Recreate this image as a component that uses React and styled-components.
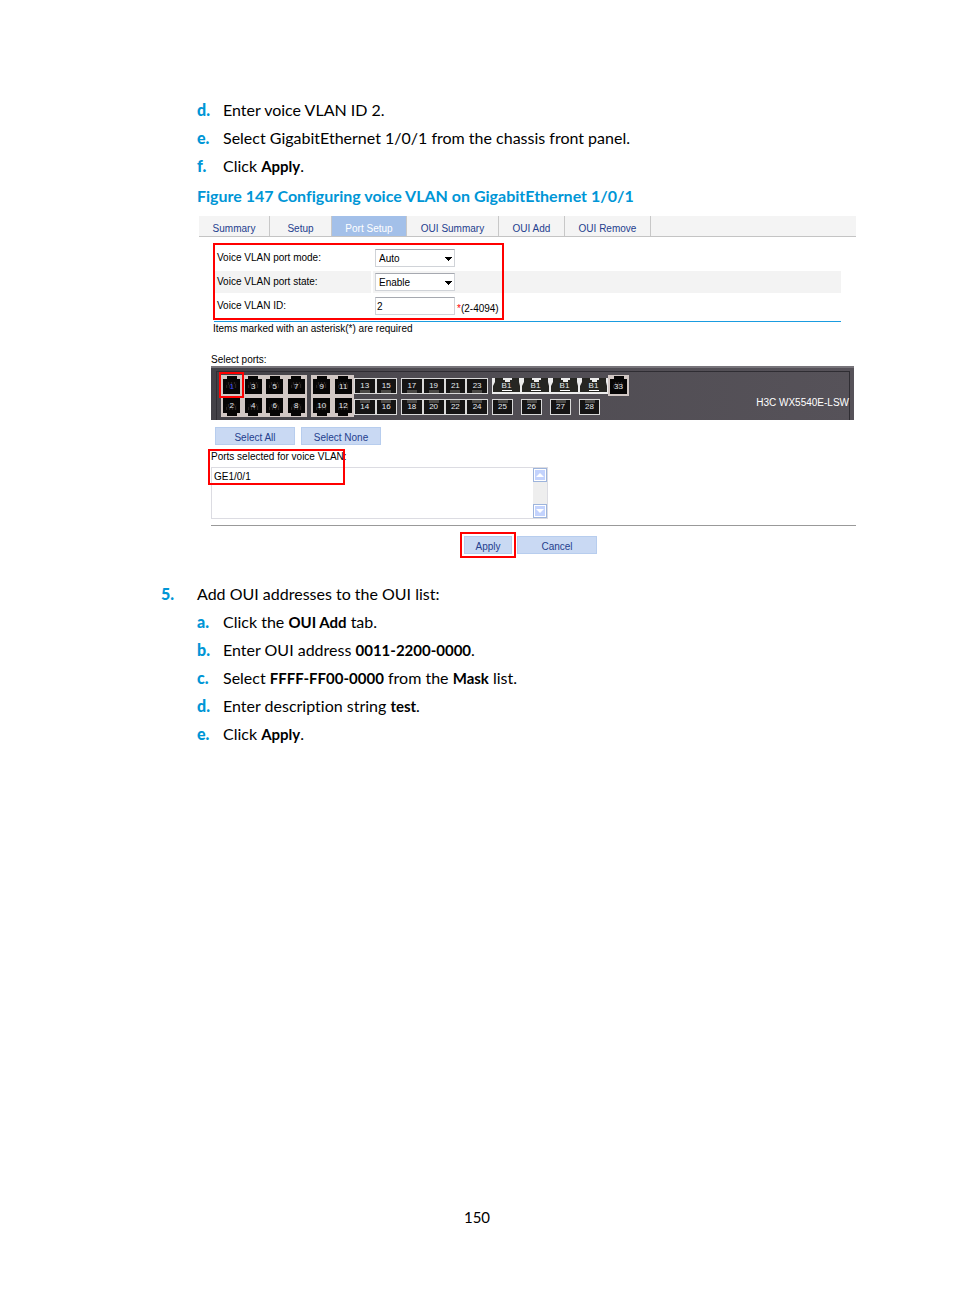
import React, { useState } from 'react';
import styled, { createGlobalStyle, css } from 'styled-components';

const tabs = [
  { label: 'Summary', width: 71 },
  { label: 'Setup', width: 62 },
  { label: 'Port Setup', width: 75 },
  { label: 'OUI Summary', width: 92 },
  { label: 'OUI Add', width: 66 },
  { label: 'OUI Remove', width: 86 },
];

const rj45 = [
  [[1, 3, 5, 7], [2, 4, 6, 8]],
  [[9, 11], [10, 12]],
];
const sfp = [
  [[13, 15], [14, 16]],
  [[17, 19, 21, 23], [18, 20, 22, 24]],
];

function Steps({ items }) {
  return (
    <List>
      {items.map(([mark, text]) => (
        <Step key={mark}>
          <Mark>{`${mark}.`}</Mark>
          <span>{text}</span>
        </Step>
      ))}
    </List>
  );
}

function Dropdown({ id, options }) {
  return (
    <SelectWrap>
      <Select id={id}>
        {options.map((o) => <option key={o}>{o}</option>)}
      </Select>
      <Caret viewBox="0 0 7 4"><path d="M0 0h7v1H6v1H5v1H4v1H3V3H2V2H1V1H0z" fill="#000" /></Caret>
    </SelectWrap>
  );
}

function ComboPort() {
  return (
    <Combo type="button">
      <ComboArt viewBox="0 0 29 16">
        <path d="M0 0h29v16H0z" fill="#ececec" />
        <path d="M3 0h8v2h2v2h5V2h2V0h7v4l1 4v6H1V8l2-4z" fill="#262622" />
        <path d="M10 12h10v1H10z" fill="#fff" />
      </ComboArt>
      <ComboLabel>B1</ComboLabel>
    </Combo>
  );
}

function Chassis({ selected, onSelect }) {
  return (
    <Frame>
      <FrontPanel>
        <Ports>
          {rj45.map((rows) => (
            <RjGroup key={rows[0][0]} $cols={rows[0].length}>
              {rows.map((row, r) => row.map((n) => (
                <RjPort
                  key={n}
                  type="button"
                  $flip={r === 1}
                  $selected={selected === n}
                  onClick={() => onSelect(n)}
                >
                  {n}
                </RjPort>
              )))}
            </RjGroup>
          ))}
          {sfp.map((rows, i) => (
            <SfpGroup key={rows[0][0]} $cols={rows[0].length} $spaced={i === 1}>
              {rows.map((row, r) => row.map((n) => (
                <SfpPort key={n} type="button" $flip={r === 1}>{n}</SfpPort>
              )))}
            </SfpGroup>
          ))}
          <ComboGroup>
            {[0, 1, 2, 3].map((n) => <ComboPort key={n} />)}
            {[25, 26, 27, 28].map((n) => (
              <SfpPort key={n} type="button" $flip>{n}</SfpPort>
            ))}
          </ComboGroup>
          <Single>
            <RjPort type="button">33</RjPort>
          </Single>
        </Ports>
        <Model>H3C WX5540E-LSW</Model>
      </FrontPanel>
    </Frame>
  );
}

function PortSetup() {
  const [port, setPort] = useState(1);

  return (
    <Screen>
      <Tabs>
        {tabs.map((t) => (
          <Tab key={t.label} href="#" $width={t.width} $active={t.label === 'Port Setup'}>
            {t.label}
          </Tab>
        ))}
      </Tabs>
      <Form>
        <Row>
          <Cell as="label" htmlFor="mode">Voice VLAN port mode:</Cell>
          <Control><Dropdown id="mode" options={['Auto', 'Manual']} /></Control>
        </Row>
        <Row $shaded>
          <Cell as="label" htmlFor="state">Voice VLAN port state:</Cell>
          <Control><Dropdown id="state" options={['Enable', 'Disable']} /></Control>
        </Row>
        <Row>
          <Cell as="label" htmlFor="vlan">Voice VLAN ID:</Cell>
          <Control>
            <Input id="vlan" type="text" defaultValue="2" />
            <Hint>
              <em>*</em>
              (2-4094)
            </Hint>
          </Control>
        </Row>
        <FormMark />
      </Form>
      <Note>Items marked with an asterisk(*) are required</Note>
      <Body>
        <Label as="p">Select ports:</Label>
        <Chassis selected={port} onSelect={setPort} />
        <SelectButtons>
          <Button type="button">Select All</Button>
          <Button type="button">Select None</Button>
        </SelectButtons>
        <Selected>
          <Label htmlFor="ports">Ports selected for voice VLAN:</Label>
          <ListBox>
            <TextArea id="ports" readOnly value={`GE1/0/${port}`} />
            <Scroll>
              <ScrollButton type="button" aria-label="Scroll up">
                <svg width="8" height="4" viewBox="0 0 8 4"><path d="M4 0l4 4H0z" fill="#fff" /></svg>
              </ScrollButton>
              <ScrollButton type="button" aria-label="Scroll down">
                <svg width="8" height="4" viewBox="0 0 8 4"><path d="M0 0h8L4 4z" fill="#fff" /></svg>
              </ScrollButton>
            </Scroll>
          </ListBox>
          <ListMark />
        </Selected>
        <Actions>
          <Marked><Button type="button" $small>Apply</Button></Marked>
          <Button type="button">Cancel</Button>
        </Actions>
      </Body>
    </Screen>
  );
}

function App() {
  return (
    <Page>
      <GlobalStyle />
      <Main>
        <Indent>
          <Steps
            items={[
              ['d', 'Enter voice VLAN ID 2.'],
              ['e', 'Select GigabitEthernet 1/0/1 from the chassis front panel.'],
              ['f', <>Click <b>Apply</b>.</>],
            ]}
          />
          <Figure>
            <Caption>Figure 147 Configuring voice VLAN on GigabitEthernet 1/0/1</Caption>
            <PortSetup />
          </Figure>
        </Indent>
        <MainStep>
          <Mark>5.</Mark>
          <div>
            Add OUI addresses to the OUI list:
            <Steps
              items={[
                ['a', <>Click the <b>OUI Add</b> tab.</>],
                ['b', <>Enter OUI address <b>0011-2200-0000</b>.</>],
                ['c', <>Select <b>FFFF-FF00-0000</b> from the <b>Mask</b> list.</>],
                ['d', <>Enter description string <b>test</b>.</>],
                ['e', <>Click <b>Apply</b>.</>],
              ]}
            />
          </div>
        </MainStep>
      </Main>
      <Footer>150</Footer>
    </Page>
  );
}

export default App;

const GlobalStyle = createGlobalStyle`
  * {
    box-sizing: border-box;
  }
  body {
    margin: 0;
    background: #fff;
    color: #000;
    font: 16px/28px Lato, sans-serif;
    font-variant-ligatures: none;
  }
  button, input, select, textarea {
    margin: 0;
    padding: 0;
    border: 0;
    border-radius: 0;
    font: inherit;
    color: inherit;
  }
  p {
    margin: 0;
  }
  b {
    font-size: 15px;
    line-height: 20px;
  }
`;
const Page = styled.div`
  display: flex;
  flex-direction: column;
  min-height: 100vh;
`;
const Main = styled.main`
  padding: 96px 98px 0 161px;
`;
const Indent = styled.div`
  padding-left: 36px;
`;
const List = styled.ol`
  margin: 0;
  padding: 0;
  list-style: none;
`;
const Step = styled.li`
  display: grid;
  grid-template-columns: 26px 1fr;
`;
const MainStep = styled.div`
  display: grid;
  grid-template-columns: 36px 1fr;
  margin-top: 22px;
`;
const Mark = styled.span`
  color: #0096d6;
  font-weight: 900;
`;
const Figure = styled.figure`
  margin: 0;
  padding-top: 2px;
`;
const Caption = styled.figcaption`
  color: #0096d6;
  font-weight: 700;
`;
const Footer = styled.footer`
  margin-top: auto;
  padding-bottom: 65px;
  text-align: center;
  font-size: 15px;
`;
const Screen = styled.div`
  margin: 6px 0 0 2px;
  font: 10px/12px 'Liberation Sans', sans-serif;
`;
const Tabs = styled.nav`
  display: flex;
  height: 21px;
  border-bottom: 1px solid #c4c4c4;
  background: #f4f4f4;
`;
const Tab = styled.a`
  width: ${(p) => p.$width}px;
  border-right: 1px solid #c8c8c8;
  padding-top: 3px;
  color: ${(p) => (p.$active ? '#fff' : '#24408e')};
  background: ${(p) => (p.$active ? '#a3c0e9' : 'none')};
  line-height: 20px;
  text-align: center;
  text-decoration: none;
`;
const Form = styled.form`
  position: relative;
  display: flex;
  flex-direction: column;
  gap: 2px;
  margin: 10px 15px 0;
  padding-bottom: 4px;
  border-bottom: 1px solid #1a9ce0;
`;
const Cell = styled.div`
  display: flex;
  align-items: center;
  padding-left: 3px;
`;
const Control = styled(Cell)`
  gap: 2px;
  padding-left: 2px;
`;
const Row = styled.div`
  display: grid;
  grid-template-columns: 157px 1fr;
  column-gap: 2px;
  height: 22px;
  ${Cell} {
    background: ${(p) => (p.$shaded ? '#f3f3f3' : 'none')};
  }
`;
const SelectWrap = styled.div`
  position: relative;
  width: 80px;
`;
const field = css`
  display: block;
  width: 80px;
  height: 18px;
  border: 1px solid #d0d3d8;
  border-top-color: #a6a9b0;
  padding: 1px 3px 0;
  background: #fff;
`;
const Select = styled.select`
  ${field};
  appearance: none;
`;
const Caret = styled.svg`
  position: absolute;
  top: 8px;
  right: 3px;
  width: 7px;
  height: 4px;
  pointer-events: none;
`;
const Input = styled.input`
  ${field};
  padding: 1px 1px 0;
`;
const Hint = styled.span`
  padding-top: 5px;
  em {
    color: #f00;
    font-style: normal;
  }
`;
const highlight = css`
  border: 2px solid #f00;
  pointer-events: none;
`;
const FormMark = styled.div`
  ${highlight};
  position: absolute;
  top: -4px;
  bottom: 1px;
  left: -1px;
  width: 291px;
`;
const Note = styled.p`
  margin-left: 14px;
  padding-top: 1px;
`;
const Body = styled.div`
  margin: 19px 0 0 12px;
`;
const Label = styled.label`
  display: block;
`;
const Frame = styled.div`
  padding: 3px 4px 0 5px;
  margin-right: 2px;
  border-top: 2px solid #77747a;
  background: linear-gradient(90deg, #434147, #4e4b51 30%, #565259);
`;
const FrontPanel = styled.div`
  display: flex;
  justify-content: space-between;
  border: 1px solid #2f2d33;
  border-bottom: 0;
  padding: 3px 0 3px 4px;
`;
const Ports = styled.div`
  display: flex;
`;
const PortGroup = styled.div`
  display: grid;
  grid-template-columns: repeat(${(p) => p.$cols}, 1fr);
  height: 42px;
`;
const RjGroup = styled(PortGroup)`
  grid-template-rows: 18px 18px;
  gap: 4px 0;
  justify-items: center;
  width: ${(p) => (p.$cols === 4 ? 86 : 43)}px;
  padding: 1px 0;
  background: #d1c7c4;
  & + & {
    margin-left: 4px;
  }
`;
const SfpGroup = styled(PortGroup)`
  grid-template-rows: 16px 16px;
  row-gap: 5px;
  width: ${(p) => (p.$cols === 4 ? 87 : 43)}px;
  padding-top: 3px;
  margin-left: ${(p) => (p.$spaced ? 4 : 0)}px;
`;
const ComboGroup = styled(PortGroup)`
  grid-template-columns: repeat(4, 29px);
  grid-template-rows: 16px 16px;
  row-gap: 5px;
  padding-top: 3px;
  margin-left: 4px;
`;
const Single = styled.div`
  width: 21px;
  height: 21px;
  padding: 1px 2px 0;
  background: #d1c7c4;
`;
const portText = css`
  color: #e4e8ee;
  font-size: 8px;
  line-height: 12px;
  text-align: center;
  cursor: pointer;
`;
const RjPort = styled.button`
  ${portText};
  width: 17px;
  height: 18px;
  padding: ${(p) => (p.$flip ? '0 0 3px' : '3px 0 0')};
  background:
    repeating-linear-gradient(80deg, #2a2421 0 1px, #0c0a0a 1px 3px) center / 11px 6px no-repeat,
    linear-gradient(#060505, #060505) center ${(p) => (p.$flip ? 'top' : 'bottom')} / 17px 15px no-repeat,
    linear-gradient(#060505, #060505) center / 10px 18px no-repeat;
  ${(p) => p.$selected && css`
    color: #3f4fff;
    outline: 2px solid #f00;
    outline-offset: 2px;
  `}
`;
const SfpPort = styled.button`
  ${portText};
  width: 100%;
  border: 1px solid #d9d9d9;
  background:
    linear-gradient(#4b4946, #4b4946) center ${(p) => (p.$flip ? 'top' : 'bottom')} / 10px 3px no-repeat,
    #151414;
  ${ComboGroup} & {
    width: 21px;
  }
`;
const Combo = styled.button`
  ${portText};
  position: relative;
  background: none;
`;
const ComboArt = styled.svg`
  position: absolute;
  inset: 0;
  width: 29px;
  height: 16px;
`;
const ComboLabel = styled.span`
  position: relative;
  display: block;
`;
const Model = styled.span`
  padding-top: 22px;
  color: #fff;
`;
const Button = styled.button`
  width: ${(p) => (p.$small ? 48 : 80)}px;
  height: 18px;
  border: 1px solid #b7cdee;
  padding-top: 3px;
  background: #c9d9f3;
  color: #24408e;
  cursor: pointer;
`;
const SelectButtons = styled.div`
  display: flex;
  gap: 6px;
  margin: 7px 0 0 4px;
`;
const Selected = styled.div`
  position: relative;
  margin-top: 6px;
  padding-bottom: 6px;
  border-bottom: 1px solid #999;
`;
const ListBox = styled.div`
  display: flex;
  width: 337px;
  height: 52px;
  margin-top: 4px;
  border: 1px solid #dcdce2;
`;
const TextArea = styled.textarea`
  flex: 1;
  padding: 3px 2px;
  resize: none;
  overflow: hidden;
`;
const Scroll = styled.div`
  display: flex;
  flex-direction: column;
  justify-content: space-between;
  background: #eee;
`;
const ScrollButton = styled.button`
  display: flex;
  align-items: center;
  justify-content: center;
  width: 14px;
  height: 14px;
  border: 1px solid #9db4dc;
  background: #c3d3fd;
  box-shadow: inset 0 0 0 1px #fff;
`;
const ListMark = styled.div`
  ${highlight};
  position: absolute;
  top: -2px;
  left: -3px;
  width: 137px;
  height: 36px;
`;
const Actions = styled.div`
  display: flex;
  align-items: center;
  justify-content: center;
  gap: 1px;
  margin-top: 6px;
  padding-right: 10px;
`;
const Marked = styled.div`
  display: flex;
  border: 2px solid #f00;
  padding: 2px;
`;
